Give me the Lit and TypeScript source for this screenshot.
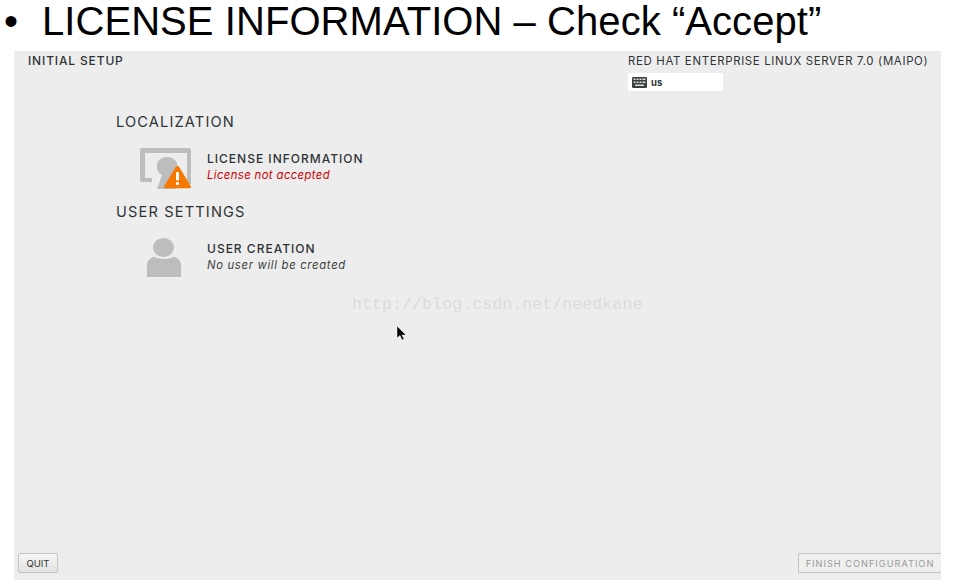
import { LitElement, html, css } from "lit";
import { customElement } from "lit/decorators.js";

@customElement("app-root")
export class AppRoot extends LitElement {
  static styles = css`
    :host { display: block; width: 974px; height: 587px; background: #fff; overflow: hidden; font-family: "Inter", "DejaVu Sans", sans-serif; }
    .title { height: 51px; display: flex; align-items: center; font-family: "Liberation Sans", sans-serif; font-size: 40px; color: #000; padding-left: 4px; box-sizing: border-box; white-space: nowrap; line-height: 42px; padding-bottom: 10px; letter-spacing: 0.06px; }
    .bullet { width: 38px; font-size: 40px; }
    .panel { position: relative; margin-left: 14px; width: 927px; height: 529px; background: #ededed; display: flex; flex-direction: column; box-sizing: border-box; color: #2e3436; }
    .top { display: flex; justify-content: space-between; padding: 3px 12px 0 14px; height: 42px; box-sizing: border-box; }
    .app { font-size: 12px; font-weight: 500; line-height: 14px; letter-spacing: 0.85px; white-space: nowrap; }
    .right { width: 301px; display: flex; flex-direction: column; gap: 5px; }
    .distro { font-size: 11.4px; line-height: 14px; white-space: nowrap; letter-spacing: 0.67px; }
    .kbd { width: 95px; height: 18px; background: #fff; display: flex; align-items: center; gap: 4px; padding-left: 4px; box-sizing: border-box; font-size: 9.5px; font-weight: 700; }
    .kbd svg { display: block; }
    .content { flex: 1; padding: 20px 0 0 102px; }
    .cat { font-size: 14.6px; line-height: 18px; letter-spacing: 1.15px; white-space: nowrap; }
    .spoke { display: flex; align-items: flex-start; height: 72px; box-sizing: border-box; padding: 17px 0 0 24px; gap: 16px; }
    .icon { width: 51px; height: 42px; display: block; flex: none; }
    .text { padding-top: 3px; }
    .name { font-size: 12px; font-weight: 500; line-height: 16px; white-space: nowrap; letter-spacing: 1px; }
    .status { font-size: 11.3px; font-style: italic; line-height: 16px; white-space: nowrap; letter-spacing: 0.68px; color: #3b3f40; }
    .status.err { color: #cc0000; letter-spacing: 0.4px; }
    .bottom { display: flex; justify-content: space-between; padding: 0 0 7px 4px; }
    .btn { height: 20px; box-sizing: border-box; border: 1px solid #c4c4c0; border-radius: 2px; font-family: inherit; font-size: 9.5px; display: flex; align-items: center; justify-content: center; background: linear-gradient(#f6f6f5, #e2e2e0); color: #2e3436; padding: 0; }
    .quit { width: 40px; }
    .finish { width: 143px; border-right: 0; border-radius: 2px 0 0 2px; background: #efefee; color: #97999a; letter-spacing: 1px; font-size: 9.2px; white-space: nowrap; }
    .mark { position: absolute; left: 338px; top: 244px; font-family: "Liberation Mono", monospace; font-size: 16.7px; line-height: 20px; color: #dcdcd8; white-space: nowrap; }
    .cursor { position: absolute; left: 382px; top: 274px; display: block; }
  `;

  render() {
    return html`
      <div class="title"><span class="bullet">•</span><span>LICENSE INFORMATION – Check “Accept”</span></div>
      <div class="panel">
        <div class="top">
          <div class="app">INITIAL SETUP</div>
          <div class="right">
            <div class="distro">RED HAT ENTERPRISE LINUX SERVER 7.0 (MAIPO)</div>
            <div class="kbd">
              <svg width="15" height="11" viewBox="0 0 15 11"><rect x="0" y="0" width="15" height="11" rx="1.2" fill="#3a3f40"/><g fill="#dcdcdc"><rect x="1.5" y="1.5" width="2" height="1.5"/><rect x="4.5" y="1.5" width="2" height="1.5"/><rect x="7.5" y="1.5" width="2" height="1.5"/><rect x="10.5" y="1.5" width="3" height="1.5"/><rect x="1.5" y="4.5" width="2" height="1.5"/><rect x="4.5" y="4.5" width="2" height="1.5"/><rect x="7.5" y="4.5" width="2" height="1.5"/><rect x="10.5" y="4.5" width="3" height="1.5"/><rect x="3" y="7.5" width="9" height="1.5"/></g></svg>
              <span>us</span>
            </div>
          </div>
        </div>
        <div class="content">
          <div class="cat">LOCALIZATION</div>
          <div class="spoke">
            <svg class="icon" viewBox="0 0 51 42">
              <path fill="#bdbdbd" d="M2 0H49a2 2 0 0 1 2 2V36H47V5H5V30H12V34H2a2 2 0 0 1-2-2V2a2 2 0 0 1 2-2Z"/>
              <path fill="#bdbdbd" d="M27 9a10.500 8.500 0 0 1 10 11L36 41H17L22 27C18 25 16.500 21 17 18.500A10.500 8.500 0 0 1 27 9Z"/>
              <path fill="#f57900" d="M37.500 18c.8 0 1.300.4 1.700 1.100L50.700 38c.7 1.300-.1 2.300-1.500 2.300H25.800c-1.400 0-2.200-1-1.500-2.300L35.800 19.100c.4-.7.900-1.100 1.700-1.100Z"/>
              <rect x="36" y="24" width="3" height="8.500" rx="1" fill="#fff"/>
              <rect x="36" y="34" width="3" height="3" rx="1" fill="#fff"/>
            </svg>
            <div class="text">
              <div class="name">LICENSE INFORMATION</div>
              <div class="status err">License not accepted</div>
            </div>
          </div>
          <div class="cat">USER SETTINGS</div>
          <div class="spoke">
            <svg class="icon" viewBox="0 0 51 42">
              <ellipse cx="23.500" cy="9.500" rx="10.500" ry="9.500" fill="#bdbdbd"/>
              <path fill="#bdbdbd" d="M7 39V27c0-4 3-7 7-8.500 2 1.500 5 2.500 10 2.500s8-1 10-2.500c4 1.500 7 4.500 7 8.500V39Z"/>
            </svg>
            <div class="text">
              <div class="name">USER CREATION</div>
              <div class="status">No user will be created</div>
            </div>
          </div>
        </div>
        <div class="bottom">
          <div class="btn quit">QUIT</div>
          <div class="btn finish">FINISH CONFIGURATION</div>
        </div>
        <div class="mark">http://blog.csdn.net/needkane</div>
        <svg class="cursor" width="12" height="16" viewBox="0 0 12 16"><path d="M1 1V13L4 10.500 6 15 8 14 6 10H10Z" fill="#000" stroke="#fff" stroke-width="0.500"/></svg>
      </div>
    `;
  }
}
